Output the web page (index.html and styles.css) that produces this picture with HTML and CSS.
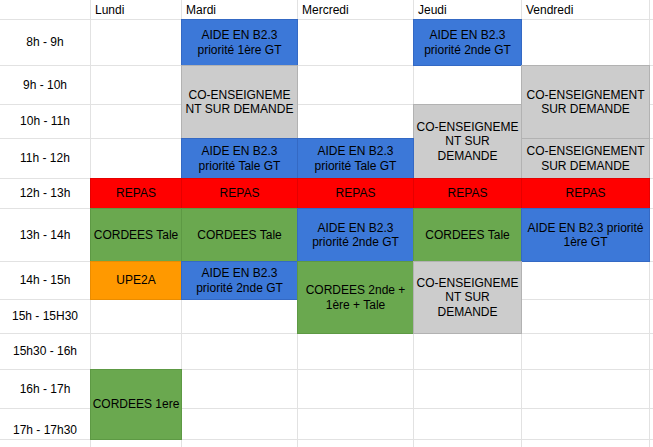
FILE: index.html
```html
<!DOCTYPE html>
<html lang="fr">
<head>
<meta charset="utf-8">
<title>Emploi du temps</title>
<link rel="stylesheet" href="styles.css">
</head>
<body>
<div class="sheet">
  <div class="cell head"></div>
  <div class="cell head">Lundi</div>
  <div class="cell head">Mardi</div>
  <div class="cell head">Mercredi</div>
  <div class="cell head">Jeudi</div>
  <div class="cell head">Vendredi</div>
  <div class="cell"></div>

  <div class="cell time">8h - 9h</div>
  <div class="cell"></div>
  <div class="cell blue">AIDE EN B2.3<br>priorité 1ère GT</div>
  <div class="cell"></div>
  <div class="cell blue">AIDE EN B2.3<br>priorité 2nde GT</div>
  <div class="cell"></div>
  <div class="cell"></div>

  <div class="cell time">9h - 10h</div>
  <div class="cell"></div>
  <div class="cell gray span2">CO-ENSEIGNEME<br>NT SUR DEMANDE</div>
  <div class="cell"></div>
  <div class="cell"></div>
  <div class="cell gray span2">CO-ENSEIGNEMENT<br>SUR DEMANDE</div>
  <div class="cell"></div>

  <div class="cell time">10h - 11h</div>
  <div class="cell"></div>
  <div class="cell"></div>
  <div class="cell gray span2">CO-ENSEIGNEME<br>NT SUR<br>DEMANDE</div>
  <div class="cell"></div>

  <div class="cell time">11h - 12h</div>
  <div class="cell"></div>
  <div class="cell blue">AIDE EN B2.3<br>priorité Tale GT</div>
  <div class="cell blue">AIDE EN B2.3<br>priorité Tale GT</div>
  <div class="cell gray">CO-ENSEIGNEMENT<br>SUR DEMANDE</div>
  <div class="cell"></div>

  <div class="cell time">12h - 13h</div>
  <div class="cell red">REPAS</div>
  <div class="cell red">REPAS</div>
  <div class="cell red">REPAS</div>
  <div class="cell red">REPAS</div>
  <div class="cell red">REPAS</div>
  <div class="cell"></div>

  <div class="cell time">13h - 14h</div>
  <div class="cell green">CORDEES Tale</div>
  <div class="cell green">CORDEES Tale</div>
  <div class="cell blue">AIDE EN B2.3<br>priorité 2nde GT</div>
  <div class="cell green">CORDEES Tale</div>
  <div class="cell blue">AIDE EN B2.3 priorité<br>1ère GT</div>
  <div class="cell"></div>

  <div class="cell time">14h - 15h</div>
  <div class="cell orange">UPE2A</div>
  <div class="cell blue">AIDE EN B2.3<br>priorité 2nde GT</div>
  <div class="cell green span2">CORDEES 2nde +<br>1ère + Tale</div>
  <div class="cell gray span2">CO-ENSEIGNEME<br>NT SUR<br>DEMANDE</div>
  <div class="cell"></div>
  <div class="cell"></div>

  <div class="cell time">15h - 15H30</div>
  <div class="cell"></div>
  <div class="cell"></div>
  <div class="cell"></div>
  <div class="cell"></div>

  <div class="cell time">15h30 - 16h</div>
  <div class="cell"></div>
  <div class="cell"></div>
  <div class="cell"></div>
  <div class="cell"></div>
  <div class="cell"></div>
  <div class="cell"></div>

  <div class="cell time">16h - 17h</div>
  <div class="cell green span2">CORDEES 1ere</div>
  <div class="cell"></div>
  <div class="cell"></div>
  <div class="cell"></div>
  <div class="cell"></div>
  <div class="cell"></div>

  <div class="cell time bottom">17h - 17h30</div>
  <div class="cell"></div>
  <div class="cell"></div>
  <div class="cell"></div>
  <div class="cell"></div>
  <div class="cell"></div>

  <div class="cell"></div>
  <div class="cell"></div>
  <div class="cell"></div>
  <div class="cell"></div>
  <div class="cell"></div>
  <div class="cell"></div>
  <div class="cell"></div>
</div>
</body>
</html>
```

FILE: styles.css
```css
html, body {
  margin: 0;
  padding: 0;
  background: #ffffff;
  overflow: hidden;
}

.sheet {
  display: grid;
  grid-template-columns: 90px 90px 115px 115px 107px 127px 1fr;
  grid-template-rows: 19px 45px 38px 33px 39px 29px 52px 37px 33px 35px 38px 30px 1fr;
  gap: 1px;
  width: 100vw;
  height: 100vh;
  background: #e2e2e2;
  font-family: "Liberation Sans", Arial, sans-serif;
  font-size: 12px;
  line-height: 14.5px;
  color: #000000;
}

.cell {
  background: #ffffff;
  display: flex;
  align-items: center;
  justify-content: center;
  text-align: center;
  padding: 0 2px;
  white-space: nowrap;
  overflow: visible;
}

.head {
  justify-content: flex-start;
  text-align: left;
  padding: 0 4px;
  padding-top: 1px;
}

.time {
  justify-content: center;
}

.bottom {
  align-items: flex-end;
  padding-bottom: 2px;
}

.span2 {
  grid-row: span 2;
}

.blue {
  background: #3c78d8;
  outline: 1px solid #3469c4;
}

.gray {
  background: #cccccc;
  outline: 1px solid #b2b2b2;
}

.red {
  background: #ff0000;
  outline: 1px solid #e50000;
}

.green {
  background: #6aa84f;
  outline: 1px solid #5d9944;
}

.orange {
  background: #ff9900;
  outline: 1px solid #ea8c00;
}
```
